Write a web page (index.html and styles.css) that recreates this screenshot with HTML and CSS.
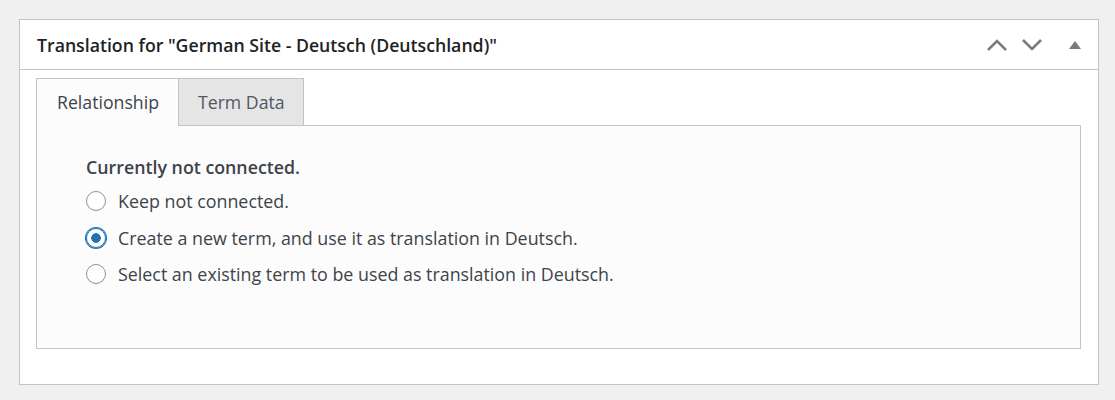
FILE: index.html
```html
<!DOCTYPE html>
<html>
<head>
  <title>Translation metabox</title>
  <link rel="stylesheet" href="styles.css">
</head>
<body>

<div class="postbox">
  <div class="postbox-header">
    <h2 class="hndle">Translation for "German Site - Deutsch (Deutschland)"</h2>
    <div class="handle-actions">
      <button class="handle-btn" type="button" aria-label="Move up">
        <svg width="22" height="14" viewBox="0 0 22 14"><polyline points="2,12 11,3 20,12" fill="none" stroke="#787c82" stroke-width="2.6"/></svg>
      </button>
      <button class="handle-btn" type="button" aria-label="Move down">
        <svg width="22" height="14" viewBox="0 0 22 14"><polyline points="2,2 11,11 20,2" fill="none" stroke="#787c82" stroke-width="2.6"/></svg>
      </button>
      <button class="handle-btn toggle" type="button" aria-label="Toggle panel">
        <svg width="14" height="10" viewBox="0 0 14 10"><polygon points="1,9 7,1 13,9" fill="#787c82"/></svg>
      </button>
    </div>
  </div>

  <div class="inside">
    <ul class="tabs">
      <li class="tab active">Relationship</li>
      <li class="tab">Term Data</li>
    </ul>
    <div class="tab-panel">
      <p class="status">Currently not connected.</p>
      <label class="choice"><input type="radio" name="relationship" value="stay" /> Keep not connected.</label>
      <label class="choice"><input type="radio" name="relationship" value="new" checked /> Create a new term, and use it as translation in Deutsch.</label>
      <label class="choice"><input type="radio" name="relationship" value="existing" /> Select an existing term to be used as translation in Deutsch.</label>
    </div>
  </div>
</div>

</body>
</html>
```

FILE: styles.css
```css
body { margin: 0; padding: 19px 16px 0 19px; background: #f0f0f1; font-family: "Open Sans", "Noto Sans", sans-serif; color: #3c434a; }

.postbox { background: #fff; border: 1px solid #c3c4c7; box-shadow: 0 1px 1px rgba(0,0,0,.04); }
.postbox-header { display: flex; align-items: center; justify-content: space-between; height: 49px; border-bottom: 1px solid #c3c4c7; }
.hndle { margin: 0; padding-left: 17px; font-size: 17.7px; font-weight: 600; color: #1d2327; }
.handle-actions { display: flex; align-items: center; padding-right: 5px; }
.handle-btn { display: flex; align-items: center; justify-content: center; width: 35px; height: 36px; padding: 0; border: none; background: none; cursor: pointer; }
.handle-btn.toggle { width: 36px; margin-left: 8px; }

.inside { padding: 8px 17px 35px 16px; }
.tabs { display: flex; margin: 0; padding: 0; list-style: none; }
.tab { height: 46px; line-height: 46px; padding: 0 18px 0 19px; font-size: 17.7px; color: #50575e; background: #e5e5e5; border: 1px solid #c3c4c7; border-bottom: none; }
.tab + .tab { border-left: none; }
.tab.active { background: #fcfcfc; color: #3c434a; position: relative; z-index: 1; height: 47px; margin-bottom: -1px; padding: 0 19px 0 20px; }
.tab-panel { box-sizing: border-box; height: 224px; padding: 30px 49px 0; background: #fcfcfc; border: 1px solid #c3c4c7; }

.status { margin: 0 0 5px; line-height: 22px; font-size: 17.8px; font-weight: 600; }
.choice { display: flex; align-items: center; gap: 12px; height: 36.5px; font-size: 17.85px; }
.choice input { appearance: none; margin: 0; width: 20px; height: 20px; border: 1px solid #8c8f94; border-radius: 50%; background: #fff; flex: none; }
.choice input:checked { border-color: #2271b1; box-shadow: 0 0 0 1px #2271b1; background: radial-gradient(circle, #2271b1 0 4.5px, #fff 5px); }
```
